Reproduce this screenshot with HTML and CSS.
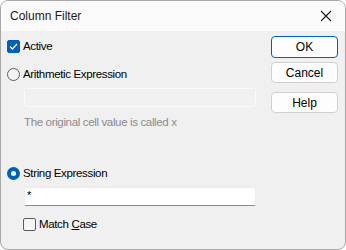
FILE: index.html
```html
<!DOCTYPE html>
<html lang="en">
<head>
  <meta charset="UTF-8" />
  <title>Column Filter</title>
  <link rel="stylesheet" href="styles.css">
</head>
<body>

  <div class="dialog">
    <div class="title-bar">
      <span class="title">Column Filter</span>
      <svg class="close" width="12" height="12" viewBox="0 0 12 12">
        <path d="M1 1 L11 11 M11 1 L1 11" stroke="#1a1a1a" stroke-width="1.1" fill="none" />
      </svg>
    </div>

    <div class="content">
      <div class="options">
        <label class="row row-active">
          <span class="check checked">
            <svg width="9" height="7" viewBox="0 0 9 7">
              <path d="M1 3.5 L3.4 6 L8 1" stroke="#fff" stroke-width="1.2" fill="none" />
            </svg>
          </span>
          <span>Active</span>
        </label>

        <label class="row row-arith">
          <span class="radio"></span>
          <span>Arithmetic Expression</span>
        </label>
        <div class="field field-disabled"></div>
        <div class="hint">The original cell value is called x</div>

        <label class="row row-string">
          <span class="radio selected"></span>
          <span>String Expression</span>
        </label>
        <div class="field field-input">*</div>

        <label class="row row-case">
          <span class="check"></span>
          <span>Match <u>C</u>ase</span>
        </label>
      </div>

      <div class="buttons">
        <button class="btn btn-default">OK</button>
        <button class="btn">Cancel</button>
        <button class="btn btn-help">Help</button>
      </div>
    </div>
  </div>

</body>
</html>
```

FILE: styles.css
```css
body {
  margin: 0;
  font-family: "Liberation Sans", Arial, sans-serif;
  font-size: 11.5px;
  letter-spacing: -0.35px;
  color: #000;
  background-color: #fff;
}

.dialog {
  width: 344px;
  height: 248px;
  border: 1px solid #a8a8a8;
  border-radius: 8px;
  background-color: #f0f0f0;
  overflow: hidden;
}

.title-bar {
  height: 30px;
  background-color: #fafafa;
  display: flex;
  align-items: center;
  justify-content: space-between;
  padding: 0 10px 0 9px;
}

.title {
  font-size: 12px;
  letter-spacing: 0;
  color: #1a1a1a;
}

.close {
  margin-right: 3px;
}

.content {
  display: flex;
  justify-content: space-between;
  padding: 4px 7px 0 6px;
}

.options {
  width: 250px;
}

.row {
  display: flex;
  align-items: center;
  height: 22px;
}

.row-arith {
  margin-top: 6px;
}

.row-string {
  margin-top: 34px;
}

.row-case {
  margin-left: 16px;
  margin-top: 7px;
}

.check {
  width: 11px;
  height: 11px;
  border: 1px solid #5c5c5c;
  border-radius: 2px;
  margin-right: 3px;
  display: flex;
  align-items: center;
  justify-content: center;
  background-color: #f5f5f5;
}

.check.checked {
  background-color: #005fb8;
  border-color: #005fb8;
}

.radio {
  width: 11px;
  height: 11px;
  border: 1px solid #5c5c5c;
  border-radius: 50%;
  margin-right: 3px;
  background-color: #f5f5f5;
}

.radio.selected {
  width: 5px;
  height: 5px;
  border: 4px solid #005fb8;
  background-color: #fff;
}

.field {
  margin-left: 17px;
  width: 230px;
  height: 17px;
  border: 1px solid #fafafa;
  border-radius: 2px;
  margin-top: 3px;
}

.field-disabled {
  background-color: #f0f0f0;
}

.field-input {
  background-color: #fff;
  border-color: #ececec;
  border-bottom-color: #8a8a8a;
  font-size: 11px;
  line-height: 15px;
  padding-left: 2px;
  width: 228px;
}

.hint {
  margin-left: 17px;
  margin-top: 9px;
  color: #8c8c8c;
}

.buttons {
  display: flex;
  flex-direction: column;
  width: 67px;
  padding-top: 1px;
}

.btn {
  font-family: inherit;
  font-size: 12px;
  letter-spacing: 0;
  color: #000;
  height: 21px;
  margin-bottom: 5px;
  background-color: #fdfdfd;
  border: 1px solid #d0d0d0;
  border-radius: 4px;
  padding: 0;
}

.btn-default {
  border-color: #005fb8;
  height: 22px;
  margin-bottom: 4px;
}

.btn-help {
  margin-top: 4px;
}
```
